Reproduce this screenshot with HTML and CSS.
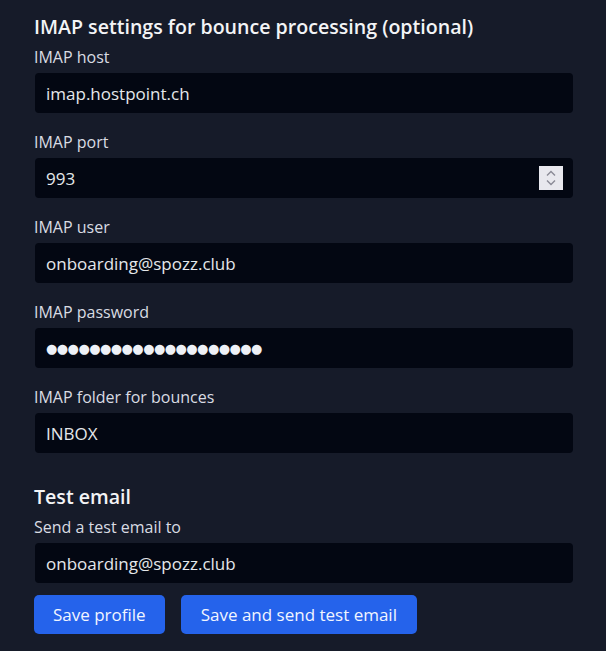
FILE: index.html
```html
<!DOCTYPE html>
<html>
<head>
<meta charset="utf-8">
<link rel="stylesheet" href="styles.css">
</head>
<body>
<form class="panel">
  <h2 class="section-title">IMAP settings for bounce processing (optional)</h2>
  <div class="field">
    <label class="label">IMAP host</label>
    <input class="input" type="text" value="imap.hostpoint.ch">
  </div>
  <div class="field">
    <label class="label">IMAP port</label>
    <div class="input number">
      <span>993</span>
      <span class="spinner">
        <svg width="24" height="24" viewBox="0 0 24 24"><path d="M8 9.5 L12 5.5 L16 9.5" fill="none" stroke="#8a8a96" stroke-width="1.4"/><path d="M8 14.5 L12 18.5 L16 14.5" fill="none" stroke="#8a8a96" stroke-width="1.4"/></svg>
      </span>
    </div>
  </div>
  <div class="field">
    <label class="label">IMAP user</label>
    <input class="input" type="text" value="onboarding@spozz.club">
  </div>
  <div class="field">
    <label class="label">IMAP password</label>
    <div class="input dots">●●●●●●●●●●●●●●●●●●●●</div>
  </div>
  <div class="field">
    <label class="label">IMAP folder for bounces</label>
    <input class="input" type="text" value="INBOX">
  </div>

  <h2 class="section-title test">Test email</h2>
  <div class="field">
    <label class="label">Send a test email to</label>
    <input class="input" type="text" value="onboarding@spozz.club">
  </div>
  <div class="actions">
    <button type="button" class="btn">Save profile</button>
    <button type="button" class="btn wide">Save and send test email</button>
  </div>
</form>
</body>
</html>
```
FILE: styles.css
```css
html, body {
  margin: 0;
  padding: 0;
  background: #161b29;
}
body {
  font-family: "Open Sans", "Noto Sans", sans-serif;
  color: #e5e7eb;
}
.panel {
  padding: 13px 33px 0 34px;
  display: flex;
  flex-direction: column;
}
.section-title {
  margin: 0 0 4px 0;
  font-size: 19.6px;
  line-height: 28px;
  font-weight: 600;
  color: #f3f4f6;
}
.section-title.test {
  margin-top: 13px;
  margin-bottom: 4px;
}
.field {
  display: flex;
  flex-direction: column;
  margin-bottom: 17px;
}
.label {
  font-size: 16px;
  line-height: 24px;
  margin-bottom: 4px;
  color: #d9dce3;
}
.input {
  box-sizing: border-box;
  height: 40px;
  width: 538px;
  margin-left: 1px;
  background: #030712;
  border: none;
  border-radius: 4px;
  padding: 0 11px;
  font-family: inherit;
  font-size: 17px;
  color: #e5e7eb;
  outline: none;
}
.number {
  display: flex;
  align-items: center;
  justify-content: space-between;
  padding-right: 10px;
}
.spinner {
  width: 24px;
  height: 24px;
  background: #e8e8ee;
  display: flex;
}
.dots {
  display: flex;
  align-items: center;
  font-family: "DejaVu Sans", sans-serif;
  font-size: 13px;
  letter-spacing: -0.55px;
  color: #eef1f7;
}
.actions {
  display: flex;
  gap: 16px;
  margin-top: -5px;
}
.btn {
  height: 39px;
  background: #2563eb;
  color: #f1f5ff;
  border: none;
  border-radius: 5px;
  padding: 0 19px;
  font-family: inherit;
  font-size: 17px;
}
.btn.wide {
  padding: 0 20px;
}
```
